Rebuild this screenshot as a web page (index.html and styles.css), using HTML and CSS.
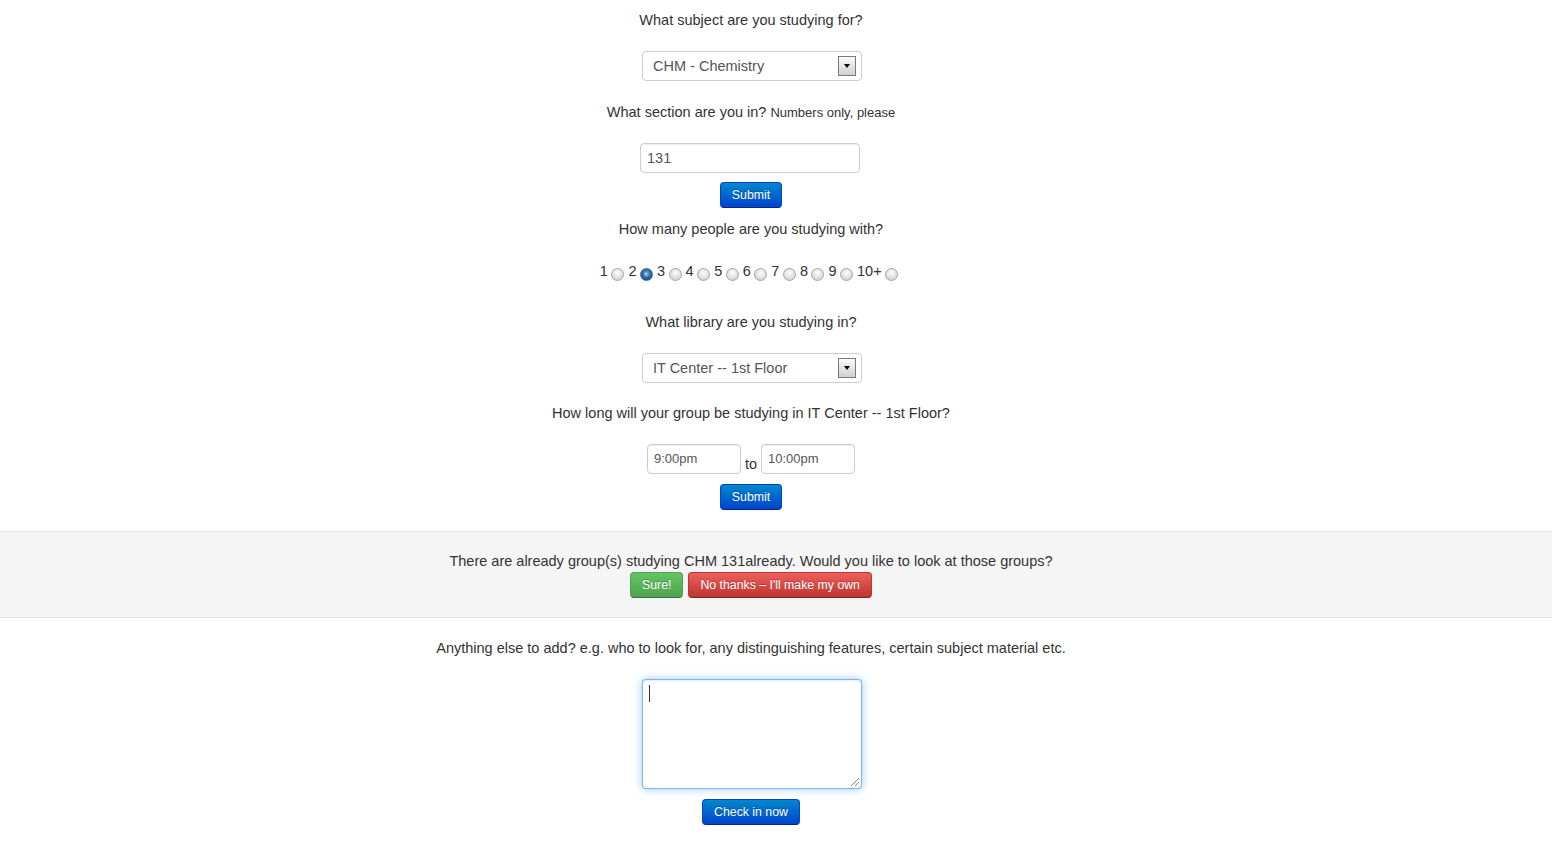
FILE: index.html
```html
<!DOCTYPE html>
<html>
<head>
<meta charset="utf-8">
<title>Study group check-in</title>
<link rel="stylesheet" href="styles.css">
</head>
<body>
<div class="wrap top">
  <p class="q">What subject are you studying for?</p>
  <div class="select mt21"><span>CHM - Chemistry</span><span class="arrow"><span class="tri"></span></span></div>
  <p class="q mt21">What section are you in? <small>Numbers only, please</small></p>
  <div class="input mt21 w-sec">131</div>
  <button class="btn btn-primary mt9">Submit</button>
  <p class="q mt11">How many people are you studying with?</p>
  <div class="radios mt22">
    <span class="opt">1<span class="radio"></span></span>
    <span class="opt">2<span class="radio on"></span></span>
    <span class="opt">3<span class="radio"></span></span>
    <span class="opt">4<span class="radio"></span></span>
    <span class="opt">5<span class="radio"></span></span>
    <span class="opt">6<span class="radio"></span></span>
    <span class="opt">7<span class="radio"></span></span>
    <span class="opt">8<span class="radio"></span></span>
    <span class="opt">9<span class="radio"></span></span>
    <span class="opt">10+<span class="radio"></span></span>
  </div>
  <p class="q mt31">What library are you studying in?</p>
  <div class="select mt21"><span>IT Center -- 1st Floor</span><span class="arrow"><span class="tri"></span></span></div>
  <p class="q mt20">How long will your group be studying in IT Center -- 1st Floor?</p>
  <div class="times mt21">
    <div class="input time">9:00pm</div>
    <span class="to">to</span>
    <div class="input time">10:00pm</div>
  </div>
  <button class="btn btn-primary mt10">Submit</button>
</div>
<div class="band">
  <div class="wrap">
    <p class="q">There are already group(s) studying CHM 131already. Would you like to look at those groups?</p>
    <div class="btnrow">
      <button class="btn btn-success">Sure!</button>
      <button class="btn btn-danger">No thanks – I'll make my own</button>
    </div>
  </div>
</div>
<div class="wrap">
  <p class="q mt20">Anything else to add? e.g. who to look for, any distinguishing features, certain subject material etc.</p>
  <div class="textarea mt21"><span class="caret"></span><span class="grip"></span></div>
  <button class="btn btn-primary mt10">Check in now</button>
</div>
</body>
</html>
```
FILE: styles.css
```css
* { box-sizing: border-box; }
html, body { margin: 0; padding: 0; background: #fff; }
body {
  font-family: "Liberation Sans", Arial, sans-serif;
  font-size: 14.5px;
  line-height: 20px;
  color: #333;
}
.wrap {
  display: flex;
  flex-direction: column;
  align-items: center;
  padding-right: 50px;
}
.top { padding-top: 10px; }
.q { margin: 0; height: 20px; line-height: 20px; white-space: nowrap; }
.q small { font-size: 13px; }
.mt9 { margin-top: 9px; }
.mt10 { margin-top: 10px; }
.mt11 { margin-top: 11px; }
.mt20 { margin-top: 20px; }
.mt21 { margin-top: 21px; }
.mt22 { margin-top: 22px; }
.mt31 { margin-top: 31px; }

.select {
  width: 220px;
  height: 30px;
  border: 1px solid #ccc;
  border-radius: 4px;
  background: #fff;
  color: #555;
  display: flex;
  align-items: center;
  justify-content: space-between;
  padding: 0 5px 0 10px;
  margin-left: 2px;
}
.arrow {
  width: 18px;
  height: 20px;
  border: 1px solid #7a7a7a;
  background: linear-gradient(#fbfbfb, #d0d0d0);
  display: flex;
  align-items: center;
  justify-content: center;
}
.tri {
  width: 0; height: 0;
  border-left: 3.5px solid transparent;
  border-right: 3.5px solid transparent;
  border-top: 4px solid #000;
}
.input {
  height: 30px;
  border: 1px solid #ccc;
  border-radius: 4px;
  background: #fff;
  color: #555;
  display: flex;
  align-items: center;
  box-shadow: inset 0 1px 1px rgba(0,0,0,0.075);
}
.w-sec { width: 220px; padding-left: 6px; margin-right: 2px; }
.times { display: flex; align-items: flex-end; gap: 4px; }
.time { width: 94px; padding-left: 6px; font-size: 13px; }
.to { line-height: 20px; font-size: 14.5px; }

.radios { display: flex; align-items: flex-start; height: 20px; }
.opt { display: inline-flex; align-items: flex-start; line-height: 20px; }
.radio {
  width: 13px;
  height: 13px;
  border-radius: 50%;
  border: 1px solid #a4a4a4;
  background: radial-gradient(circle at 50% 35%, #fdfdfd, #d8d8d8 70%);
  margin: 7px 4px 0 3.5px;
  position: relative;
}
.radio.on {
  border-color: #3a6a94;
  background: radial-gradient(circle at 50% 40%, #5fa8de, #1c4a78 75%);
}
.radio.on::after {
  content: "";
  position: absolute;
  left: 3px; top: 3px;
  width: 5px; height: 5px;
  border-radius: 50%;
  background: radial-gradient(circle at 40% 35%, #a9d4f5, #2c6aa4 90%);
}

.btn {
  font-family: "Liberation Sans", Arial, sans-serif;
  font-size: 12.3px;
  line-height: 18px;
  height: 26px;
  padding: 3px 11px;
  border-radius: 4px;
  color: #fff;
  text-shadow: 0 -1px 0 rgba(0,0,0,0.25);
  cursor: pointer;
  border: 1px solid rgba(0,0,0,0.15);
}
.btn-primary { background: linear-gradient(#0088cc, #0044cc); border-color: #0044cc #0044cc #002a80; }
.btn-success { background: linear-gradient(#62c462, #51a351); border-color: #51a351 #51a351 #387038; }
.btn-danger { background: linear-gradient(#ee5f5b, #bd362f); border-color: #bd362f #bd362f #802420; }

.band {
  margin-top: 21px;
  background: #f5f5f5;
  border-top: 1px solid #e3e3e3;
  border-bottom: 1px solid #e3e3e3;
  padding: 19px 0 19px;
}
.btnrow { display: flex; gap: 5px; margin-top: 1px; }

.textarea {
  width: 220px;
  height: 110px;
  border: 1px solid rgba(82,168,236,0.8);
  border-radius: 4px;
  box-shadow: inset 0 1px 1px rgba(0,0,0,0.075), 0 0 8px rgba(82,168,236,0.6);
  background: #fff;
  position: relative;
  margin-left: 2px;
}
.caret {
  position: absolute;
  left: 6px; top: 5px;
  width: 1px; height: 17px;
  background: #333;
}
.grip {
  position: absolute;
  right: 2px; bottom: 2px;
  width: 8px; height: 8px;
  background: linear-gradient(135deg, transparent 45%, #888 45%, #888 55%, transparent 55%, transparent 70%, #888 70%, #888 80%, transparent 80%);
}
```
